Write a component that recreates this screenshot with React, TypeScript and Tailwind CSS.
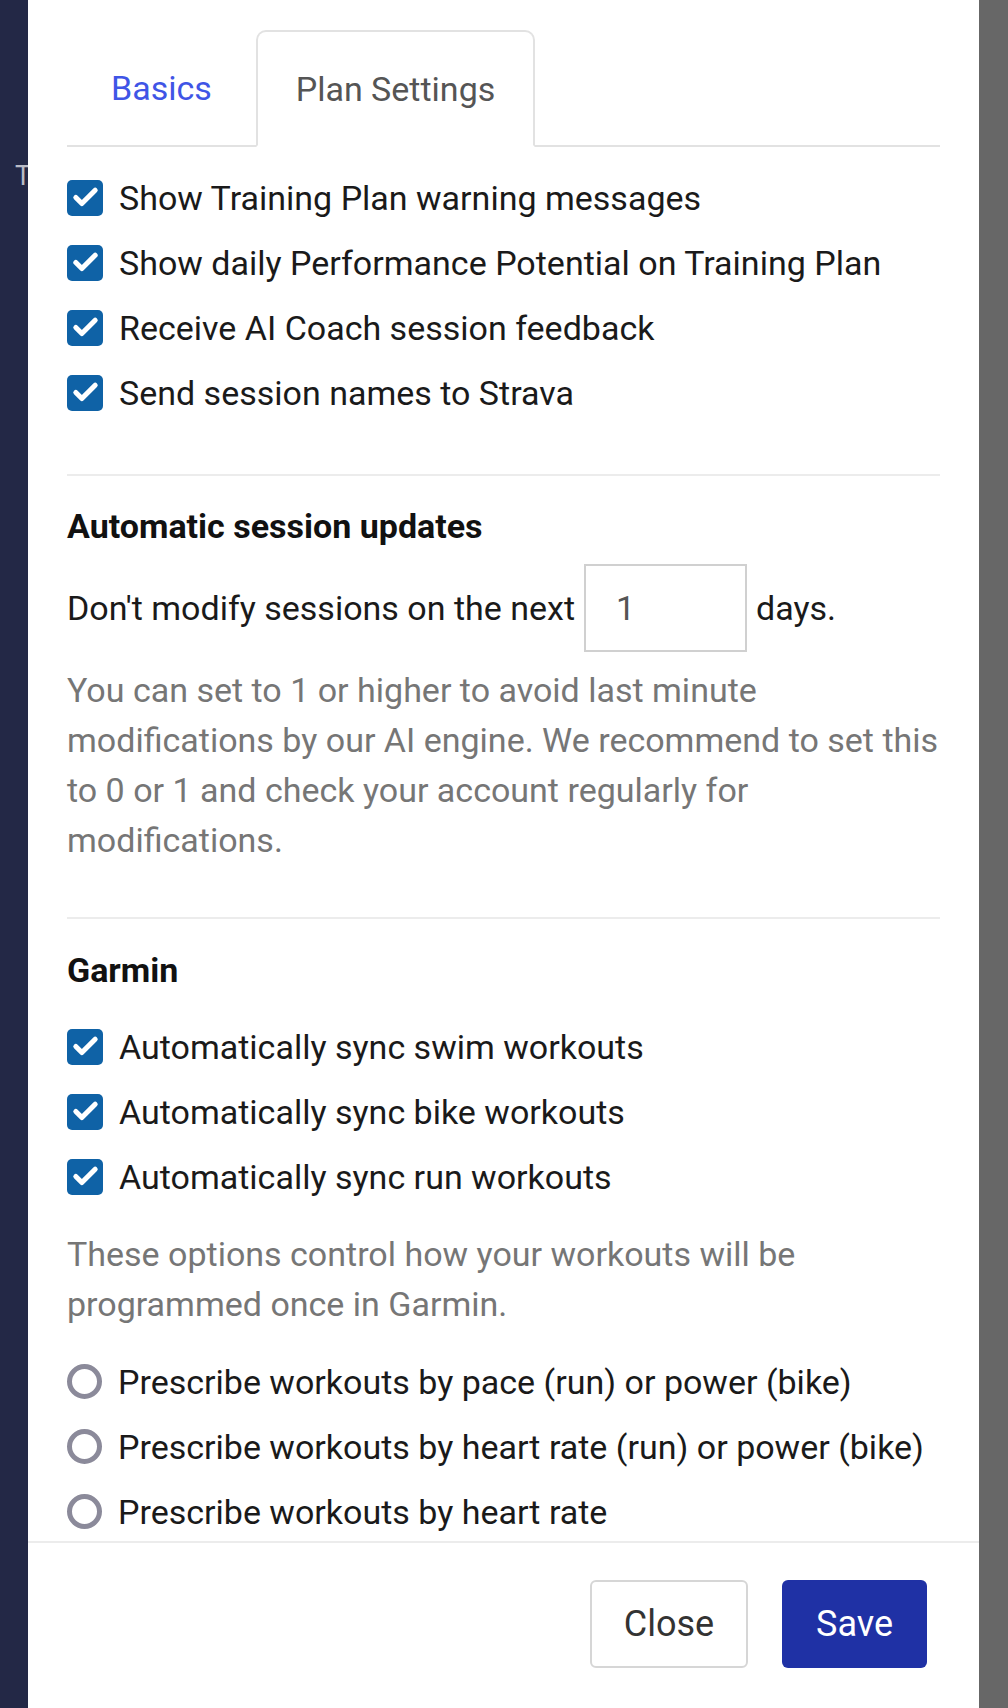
import { Check } from "lucide-react";

const planOptions = [
  "Show Training Plan warning messages",
  "Show daily Performance Potential on Training Plan",
  "Receive AI Coach session feedback",
  "Send session names to Strava",
];

const garminSync = [
  "Automatically sync swim workouts",
  "Automatically sync bike workouts",
  "Automatically sync run workouts",
];

const prescribeOptions = [
  "Prescribe workouts by pace (run) or power (bike)",
  "Prescribe workouts by heart rate (run) or power (bike)",
  "Prescribe workouts by heart rate",
];

const CheckRow = ({ label }: { label: string }) => (
  <label className="flex items-center h-[65px] gap-[16px]">
    <span className="w-[36px] h-[36px] rounded-[5px] bg-[#0f62a6] flex items-center justify-center shrink-0">
      <Check size={29} strokeWidth={4.2} className="text-white" />
    </span>
    <span className="text-[#1a1a1a] whitespace-nowrap">{label}</span>
  </label>
);

const RadioRow = ({ label }: { label: string }) => (
  <label className="flex items-center h-[65px] gap-[16px]">
    <span className="w-[35px] h-[35px] rounded-full border-[5px] border-[#8b8a9a] shrink-0" />
    <span className="text-[#1a1a1a] whitespace-nowrap">{label}</span>
  </label>
);

export default function App() {
  return (
    <div
      className="w-[1008px] h-[1708px] flex overflow-hidden text-[34px] leading-[50px]"
      style={{ fontFamily: "Roboto, 'Noto Sans', sans-serif" }}
    >
      {/* backdrop left, a page title peeks out behind the modal */}
      <div className="w-[28px] shrink-0 bg-[#232846] overflow-hidden pt-[163px] pl-[15px]">
        <div className="text-[27px] leading-[27px] text-[#b9bbc6]">T</div>
      </div>

      {/* modal */}
      <div className="w-[951px] shrink-0 bg-white flex flex-col">
        <div className="h-[1541px] overflow-hidden px-[39px]">
          {/* Tabs */}
          <div className="flex pt-[30px] border-b-2 border-[#e2e2e2]">
            <div className="w-[189px] h-[115px] flex items-center justify-center text-[#3f55e6]">
              Basics
            </div>
            <div className="w-[279px] h-[117px] -mb-[2px] flex items-center justify-center border-2 border-[#e2e2e2] border-b-white rounded-t-[10px] bg-white text-[#555]">
              Plan Settings
            </div>
          </div>

          <div className="mt-[18px]">
            {planOptions.map((o) => (
              <CheckRow key={o} label={o} />
            ))}
          </div>

          <div className="mt-[49px] h-[2px] bg-[#ececec]" />

          <h3 className="mt-[30px] h-[40px] leading-[40px] text-[34px] font-bold text-[#111]">
            Automatic session updates
          </h3>

          <div className="mt-[18px] flex items-center gap-[9px] text-[#1a1a1a]">
            <span>Don't modify sessions on the next</span>
            <div className="w-[163px] h-[88px] border-2 border-[#d0d0d0] flex items-center pl-[30px] text-[#555]">
              1
            </div>
            <span>days.</span>
          </div>

          <p className="mt-[13px] text-[#767676]">
            You can set to 1 or higher to avoid last minute modifications by our AI engine. We recommend to set this to 0 or 1 and check your account regularly for modifications.
          </p>

          <div className="mt-[52px] h-[2px] bg-[#ececec]" />

          <h3 className="mt-[31px] h-[40px] leading-[40px] text-[34px] font-bold text-[#111]">
            Garmin
          </h3>

          <div className="mt-[24px]">
            {garminSync.map((o) => (
              <CheckRow key={o} label={o} />
            ))}
          </div>

          <p className="mt-[20px] text-[#767676]">
            These options control how your workouts will be programmed once in Garmin.
          </p>

          <div className="mt-[20px]">
            {prescribeOptions.map((o) => (
              <RadioRow key={o} label={o} />
            ))}
          </div>
        </div>

        {/* Footer */}
        <div className="border-t-2 border-[#ececec] flex justify-end gap-[34px] pt-[37px] pr-[52px]">
          <button className="w-[158px] h-[88px] rounded-[6px] border-2 border-[#d6d6d6] bg-white text-[36px] text-[#333]">
            Close
          </button>
          <button className="w-[145px] h-[88px] rounded-[6px] bg-[#1f31a5] text-[36px] text-white">
            Save
          </button>
        </div>
      </div>

      {/* backdrop right */}
      <div className="flex-1 bg-[#676767]" />
    </div>
  );
}
